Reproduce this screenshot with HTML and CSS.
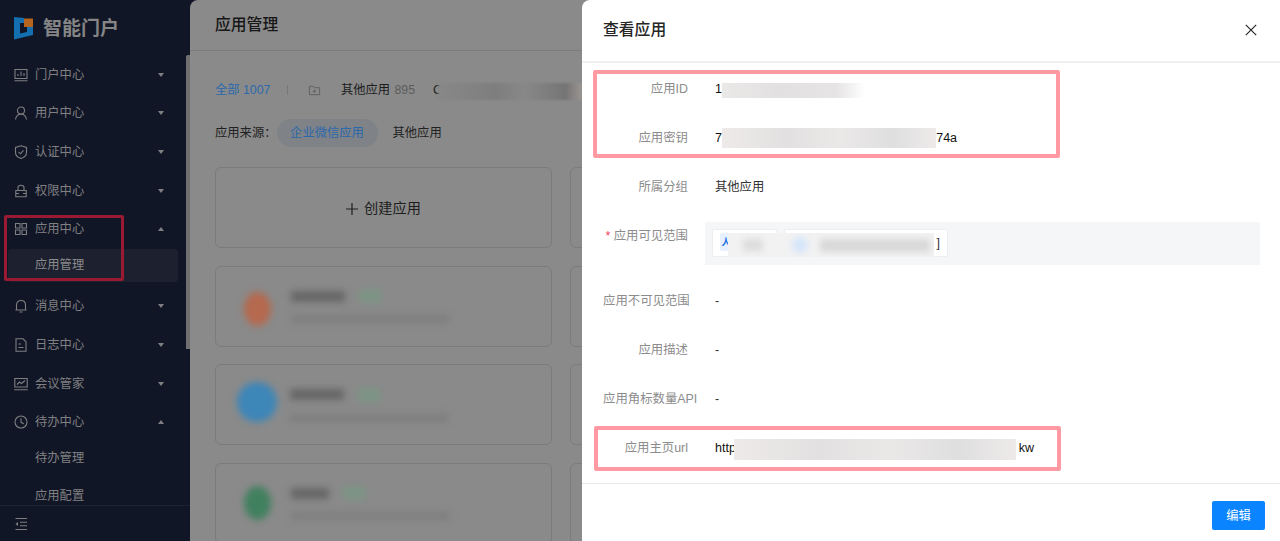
FILE: index.html
```html
<!DOCTYPE html>
<html lang="zh-CN">
<head>
<meta charset="utf-8">
<title>应用管理</title>
<link rel="stylesheet" href="styles.css">
</head>
<body>
<aside class="sidebar">
  <div class="logo">
    <svg class="logo-mark" width="20" height="23" viewBox="0 0 20 23">
      <path d="M0 0L10 1V6H6V16.5L13 15V10H19V18L0 22.500Z" fill="#146fb0"/>
      <path d="M10 1.500H19V10H10Z" fill="#b5651d"/>
    </svg>
    <span class="logo-text">智能门户</span>
  </div>
  <nav class="nav">
    <div class="nav-item"><svg class="ico" viewBox="0 0 14 14"><path d="M1 1.500H13V10.500H1ZM0.500 12.800H13.500M4 8V6M7 8V3.500M10 8V5"/></svg><span>门户中心</span><i class="caret"></i></div>
    <div class="nav-item"><svg class="ico" viewBox="0 0 14 14"><circle cx="7" cy="4.500" r="3.500"/><path d="M1.500 13.500C2 10 4 8.300 7 8.300S12 10 12.500 13.500"/></svg><span>用户中心</span><i class="caret"></i></div>
    <div class="nav-item"><svg class="ico" viewBox="0 0 14 14"><path d="M7 .8L12.500 2.500V7.500C12.500 10.500 10 12.500 7 13.500C4 12.500 1.500 10.500 1.500 7.500V2.500Z"/><path d="M4.500 6.800L6.500 8.800L9.500 5.300"/></svg><span>认证中心</span><i class="caret"></i></div>
    <div class="nav-item"><svg class="ico" viewBox="0 0 14 14"><path d="M1.800 6.500H12.200V12.800H1.800ZM4 6.500V3.500C4 .5 10 .5 10 3.500V6.500M1.800 9.500H5M9 9.500H12.200"/></svg><span>权限中心</span><i class="caret"></i></div>
    <div class="nav-item"><svg class="ico" viewBox="0 0 14 14"><path d="M1.500 1.500H6V6H1.500ZM8 1.500H12.500V6H8ZM1.500 8H6V12.500H1.500ZM8 8H12.500V12.500H8Z"/></svg><span>应用中心</span><i class="caret up"></i></div>
    <div class="sub-item active">应用管理</div>
    <div class="nav-item"><svg class="ico" viewBox="0 0 14 14"><path d="M2.500 11V6C2.500 3 4.500 1.500 7 1.500S11.500 3 11.500 6V11ZM1.500 11H12.500M5.500 13H8.500"/></svg><span>消息中心</span><i class="caret"></i></div>
    <div class="nav-item"><svg class="ico" viewBox="0 0 14 14"><path d="M2 .8H9L12 3.800V13.200H2ZM4.500 6H7M4.500 9.500H9.500"/></svg><span>日志中心</span><i class="caret"></i></div>
    <div class="nav-item"><svg class="ico" viewBox="0 0 14 14"><path d="M.8 1.500H13.200V10H.8ZM.2 12.800H13.800M3 7.500L5.500 5L7.500 6.500L11 3.500"/></svg><span>会议管家</span><i class="caret"></i></div>
    <div class="nav-item"><svg class="ico" viewBox="0 0 14 14"><circle cx="7" cy="7" r="6"/><path d="M7 3.200V7.300L9.800 8.800"/></svg><span>待办中心</span><i class="caret up"></i></div>
    <div class="sub-item">待办管理</div>
    <div class="sub-item">应用配置</div>
    <div class="thumb"></div>
  </nav>
  <div class="side-foot"><svg class="ico" viewBox="0 0 14 14"><path d="M1.500 1.500H13M6 5.200H13M6 8.800H13M1.500 12.500H13"/><path class="solid" d="M4 5V9L1.500 7Z"/></svg></div>
</aside>

<main class="main">
  <header class="main-head">应用管理</header>
  <div class="groups">
    <span class="group-all">全部 1007</span>
    <span class="group-sep"></span>
    <svg class="folder" viewBox="0 0 14 14"><path d="M1.500 2.500H5.500L7 4H12.500V11.500H1.500ZM7 6V9.500M5.200 7.800H8.800"/></svg>
    <span class="group-name">其他应用 <em>895</em></span>
    <span class="group-next">C</span>
    <span class="group-blur"></span>
  </div>
  <div class="sources">
    <span>应用来源：</span>
    <span class="pill">企业微信应用</span>
    <span class="source-other">其他应用</span>
  </div>
  <div class="cards">
    <div class="card create"><svg class="plus" viewBox="0 0 12 12"><path d="M6 0V12M0 6H12"/></svg>创建应用</div>
    <div class="card"></div>
    <div class="card"><div class="app-icon small orange"></div><div class="app-lines"><div class="app-top"><b class="app-name"></b><b class="app-tag"></b></div><div class="app-desc"></div></div></div>
    <div class="card"></div>
    <div class="card"><div class="app-icon blue"></div><div class="app-lines"><div class="app-top"><b class="app-name"></b><b class="app-tag"></b></div><div class="app-desc"></div></div></div>
    <div class="card"></div>
    <div class="card"><div class="app-icon small green"></div><div class="app-lines"><div class="app-top"><b class="app-name short"></b><b class="app-tag"></b></div><div class="app-desc"></div></div></div>
    <div class="card"></div>
  </div>
</main>

<section class="drawer">
  <header class="drawer-head">
    <span>查看应用</span>
    <svg class="close" viewBox="0 0 12 12"><path d="M.8 .8L11.200 11.200M11.200 .8L.8 11.200"/></svg>
  </header>
  <div class="drawer-body">
    <div class="row"><label>应用ID</label><div class="val">1<span class="mask mask-id"></span></div></div>
    <div class="row"><label>应用密钥</label><div class="val">7c<span class="mask mask-key"></span>74a</div></div>
    <div class="row"><label>所属分组</label><div class="val dark">其他应用</div></div>
    <div class="row scope-row"><label><i class="star">*</i> 应用可见范围</label>
      <div class="scope">
        <div class="tag tag-a"><b class="tag-ava">人</b></div>
        <div class="tag tag-b">]</div>
        <div class="scope-mask"><i class="smudge"></i><i class="spot"></i><i class="bar"></i></div>
      </div>
    </div>
    <div class="row"><label>应用不可见范围</label><div class="val dark">-</div></div>
    <div class="row"><label>应用描述</label><div class="val dark">-</div></div>
    <div class="row"><label>应用角标数量API</label><div class="val dark">-</div></div>
    <div class="row"><label>应用主页url</label><div class="val">http<span class="mask mask-url"></span>kw</div></div>
  </div>
  <footer class="drawer-foot"><button class="btn">编辑</button></footer>
</section>

<div class="mark mark-side"></div>
<div class="mark mark-keys"></div>
<div class="mark mark-url"></div>
</body>
</html>
```

FILE: styles.css
```css
* { box-sizing: border-box; }
html, body { height: 100%; }
body {
  margin: 0;
  display: flex;
  height: 541px;
  overflow: hidden;
  position: relative;
  background: #111627;
  font-family: "Liberation Sans", "Noto Sans CJK SC", sans-serif;
  font-size: 12.3px;
  line-height: 20px;
}

/* sidebar */
.sidebar { width: 190px; flex: none; display: flex; flex-direction: column; color: #808081; }
.logo { height: 55.4px; flex: none; display: flex; align-items: center; padding: 0 0 0 14px; }
.logo-mark { margin-top: 1px; }
.logo-text { margin-left: 9px; font-size: 19px; font-weight: 700; color: #858585; line-height: 24px; margin-top: 2px; }
.nav { flex: 1; position: relative; overflow: hidden; }
.nav-item { height: 38.67px; display: flex; align-items: center; padding-left: 14px; }
.nav-item span { margin-left: 7px; flex: none; }
.ico { width: 14px; height: 14px; flex: none; fill: none; stroke: #7f7f80; stroke-width: 1.1; }
.ico .solid { fill: #7f7f80; stroke: none; }
.caret { position: absolute; left: 158px; width: 0; height: 0; border-left: 3.5px solid transparent; border-right: 3.5px solid transparent; border-top: 4px solid #808081; }
.caret.up { border-top: 0; border-bottom: 4px solid #808081; }
.sub-item { height: 33px; margin: 0 12px 5.4px 8px; padding-left: 27px; line-height: 33px; border-radius: 4px; }
.sub-item.active { background: #1d212f; color: #8a8a8b; }
.thumb { position: absolute; right: 0; top: 0; width: 4px; height: 294px; background: #6f6f70; border-radius: 2px 0 0 0; }
.side-foot { height: 36px; flex: none; border-top: 1px solid #1d2233; display: flex; align-items: center; padding-left: 14px; }

/* main */
.main { flex: 1; min-width: 0; background: #8a8a8a; border-radius: 8px 0 0 0; overflow: hidden; color: #1c1c1c; }
.main-head { height: 51px; border-bottom: 1px solid #7c7c7c; padding-left: 25px; font-size: 15.8px; font-weight: 500; line-height: 50px; color: #171717; }
.groups { display: flex; align-items: center; height: 20px; margin-top: 29px; padding-left: 25px; position: relative; }
.group-all { color: #2a69ad; }
.group-sep { width: 1px; height: 10px; background: #787878; margin: 0 19.500px 0 17px; }
.folder { width: 13px; height: 13px; fill: none; stroke: #5e5e5e; stroke-width: 1; margin-right: 20px; }
.group-name em { font-style: normal; color: #5c5c5c; margin-left: 1px; }
.group-next { margin-left: 18px; }
.group-blur { position: absolute; left: 248px; top: 3px; width: 145px; height: 17px; background: linear-gradient(90deg, #888 0, #7e7e7e 40%, #888 60%, #757575 88%, #9c9794 100%); filter: blur(1px); }
.sources { display: flex; align-items: center; height: 28px; margin-top: 19px; padding-left: 25px; color: #212121; }
.pill { margin-left: 0; width: 101px; height: 28px; line-height: 28px; border-radius: 14px; text-align: center; background: #7f8286; color: #2a69ad; }
.source-other { margin-left: 15px; }
.cards { display: grid; grid-template-columns: 337px 337px; column-gap: 18px; row-gap: 17.5px; margin-top: 20px; padding-left: 25px; }
.card { height: 81px; border: 1px solid #7b7b7b; border-radius: 6px; display: flex; align-items: center; }
.create { justify-content: center; font-size: 14.2px; color: #1e1e1e; }
.plus { width: 12px; height: 12px; margin: 3px 6px 0 0; fill: none; stroke: #1e1e1e; stroke-width: 1.2; }
.app-icon { width: 40px; height: 40px; border-radius: 50%; margin-left: 21px; flex: none; filter: blur(3.5px); }
.app-icon.small { width: 27px; height: 34px; margin-left: 28px; margin-right: 7px; }
.orange { background: #b5694e; margin-top: 5px; }
.blue { background: #3d86b8; margin-top: -5px; }
.green { background: #41805f; }
.app-lines { margin-left: 13px; }
.app-top { display: flex; align-items: center; }
.app-name { display: block; width: 54px; height: 11px; background: #666; filter: blur(3.5px); }
.app-name.short { width: 38px; }
.app-tag { display: block; width: 22px; height: 14px; margin-left: 14px; background: #7c9484; filter: blur(3.5px); }
.app-desc { width: 158px; height: 8px; margin-top: 12px; background: #7e7e7e; filter: blur(3.5px); }

/* drawer */
.drawer { position: absolute; left: 582px; top: 0; bottom: 0; right: 0; background: #fff; border-radius: 8px 0 0 0; display: flex; flex-direction: column; }
.drawer-head { height: 63px; flex: none; border-bottom: 2px solid #f0f0f0; padding: 0 22px 1px 21px; display: flex; align-items: center; justify-content: space-between; font-size: 15.8px; font-weight: 500; color: #262626; }
.close { width: 12px; height: 12px; fill: none; stroke: #262626; stroke-width: 1.2; margin-right: 1px; }
.drawer-body { flex: 1; padding-top: 1.500px; }
.row { display: flex; height: 49px; line-height: 49px; font-size: 12.4px; }
.row label { width: 85px; margin-left: 21px; flex: none; text-align: right; color: #8c8c8c; white-space: nowrap; }
.val { margin-left: 27px; display: flex; align-items: center; color: #111; font-size: 12.5px; height: 49px; }
.val.dark { color: #333; font-size: 12.3px; }
.mask { display: block; height: 20px; background: linear-gradient(90deg, #eeeaea 0, #e2e0e0 30%, #ebe8e8 55%, #dfdfdf 80%, #eeeaea 100%); }
.mask-id { width: 143px; height: 15px; margin-top: 3px; background: linear-gradient(90deg, #ebe8e8 0, #e2e0e0 40%, #e6e4e4 80%, #fff 100%); }
.mask-key { width: 214px; margin-left: -6px; }
.mask-url { width: 282px; height: 21px; margin-top: 3px; margin-left: -2px; margin-right: 3px; }
.star { color: #f5455c; font-style: normal; }
.scope-row { height: 65px; }
.scope { position: relative; margin: 10.500px 20px 0 17px; flex: 1; height: 43px; background: #f5f6f8; padding: 7px; display: flex; gap: 7px; }
.tag { height: 28px; background: #fff; border: 1px solid #eceef1; border-radius: 2px; line-height: 26px; font-size: 12.3px; color: #333; }
.tag-a { width: 65px; padding: 3px 0 0 7px; }
.tag-b { width: 164px; text-align: right; padding-right: 7px; }
.tag-ava { display: block; width: 12px; height: 18px; line-height: 18px; background: #e6f0ff; color: #1a6fe0; font-size: 9px; text-align: center; border-radius: 2px; }
.scope-mask { position: absolute; left: 23px; top: 11px; width: 206px; height: 24px; background: #f2f2f2; display: flex; align-items: center; overflow: hidden; }
.smudge { width: 20px; height: 12px; margin-left: 15px; background: #dcdcdc; filter: blur(3px); }
.spot { width: 16px; height: 16px; margin-left: 29px; border-radius: 50%; background: #d5e5fb; filter: blur(3px); }
.bar { width: 110px; height: 13px; margin-left: 12px; background: #d8d8d8; filter: blur(3px); }
.drawer-foot { height: 58px; flex: none; border-top: 1px solid #e8e8e8; padding: 17px 15px 0 0; display: flex; justify-content: flex-end; align-items: flex-start; }
.btn { width: 53px; height: 29px; border: 0; padding: 0; border-radius: 2px; background: #0a84ff; color: #fff; font: inherit; }

/* annotation frames */
.mark { position: absolute; pointer-events: none; border-radius: 2px; }
.mark-side { left: 4px; top: 215px; width: 120px; height: 66px; border: 3.5px solid #9a1b31; }
.mark-keys { left: 593px; top: 70px; width: 467px; height: 88px; border: 4px solid #ff9aa2; }
.mark-url { left: 594px; top: 426px; width: 467px; height: 45px; border: 4px solid #ff9aa2; }
```
